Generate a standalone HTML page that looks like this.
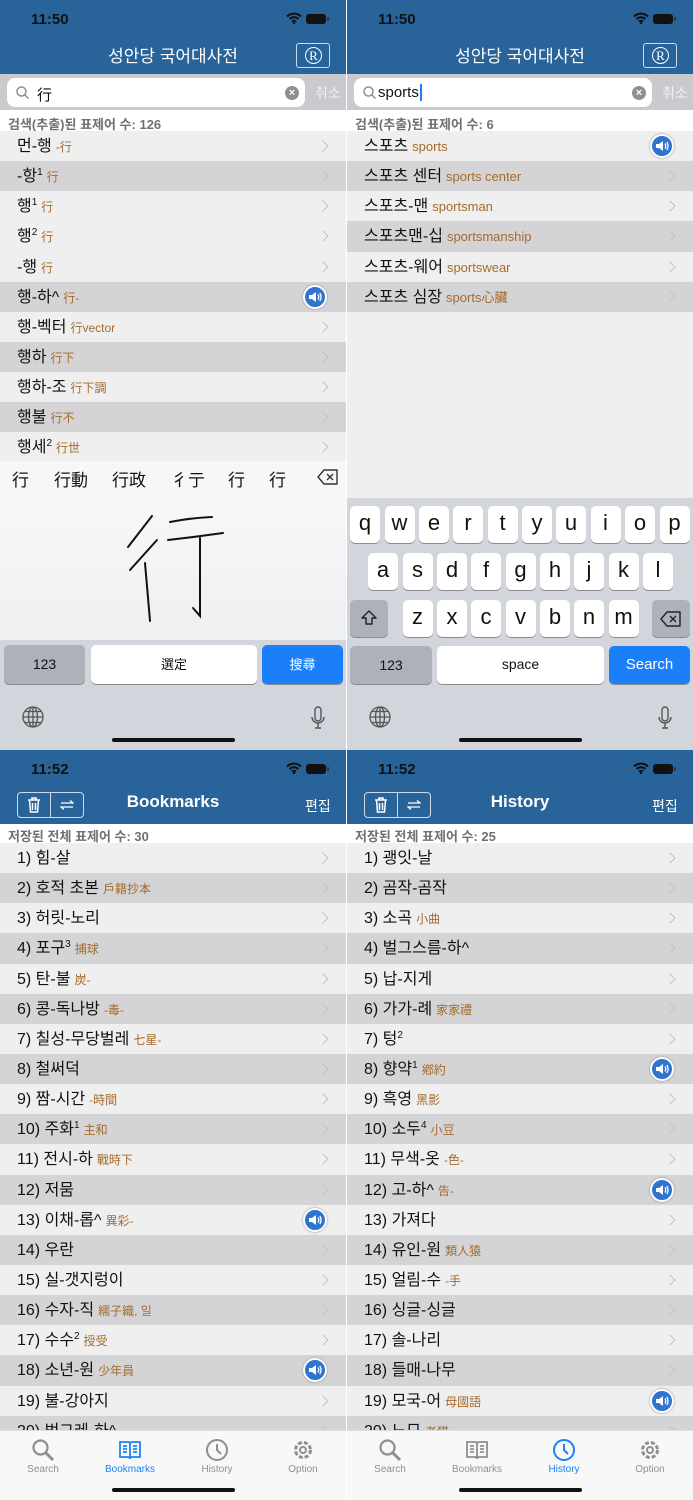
<!DOCTYPE html>
<html><head><meta charset="utf-8">
<style>
*{margin:0;padding:0;box-sizing:border-box}
body{width:693px;height:1500px;background:#fff;position:relative;overflow:hidden;font-family:"Liberation Sans","Noto Sans CJK KR",sans-serif}
.s{position:absolute;width:346px;height:750px;overflow:hidden;background:#efeff0}
.st{position:absolute;left:0;top:0;width:100%;height:38px;background:#28649a}
.tm{position:absolute;left:31px;top:11px;font-size:15px;font-weight:bold;color:#111}
.bat{position:absolute;left:306px;top:14px;width:20px;height:10px;background:#111;border-radius:3px}
.bat:after{content:"";position:absolute;right:-3px;top:3px;width:2px;height:4px;background:#333;border-radius:1px}
.dots{position:absolute;left:268px;top:18px;width:14px;height:2px;background:repeating-linear-gradient(90deg,#3a5f82 0 2px,transparent 2px 4px)}
.wifi{position:absolute;left:286px;top:12px}
.nav{position:absolute;left:0;top:38px;width:100%;height:36px;background:#28649a;color:#fff}
.ttl{position:absolute;left:0;right:0;top:4px;text-align:center;font-size:17px}
.rb{position:absolute;left:296px;top:5px;width:34px;height:25px;border:1px solid #cfdbe8;border-radius:3px}
.rb b{position:absolute;left:8px;top:3px;width:17px;height:17px;border:1.5px solid #fff;border-radius:50%;font:13px "Liberation Serif",serif;text-align:center;line-height:15px}
.sb{position:absolute;left:0;top:74px;width:100%;height:36px;background:#c9c9ce}
.fld{position:absolute;left:7px;top:4px;width:298px;height:29px;background:#fff;border-radius:8px;font-size:15px;color:#111}
.fld .q{position:absolute;left:30px;top:6px}
.x{position:absolute;right:6px;top:8px;width:14px;height:14px;border-radius:50%;background:#8e8e93;color:#fff;font-size:11px;line-height:14px;text-align:center;font-weight:bold}
.cc{position:absolute;left:315px;top:9px;font-size:14px;color:#eef0f4}
.cnt{position:absolute;left:0;width:100%;height:21px;background:#fff;font-size:13px;color:#707070;padding:4px 0 0 8px;font-weight:bold}
.list{position:absolute;left:0;width:100%}
.r{position:relative;height:30.15px;background:#efeff0;padding-left:17px;font-size:16px;color:#111;line-height:31px;white-space:nowrap}
.r.d{background:#d4d4d6}
.r .h{font-size:12px;color:#a56a2b;margin-left:4px}
.r sup{font-size:10px;vertical-align:6px;line-height:0}
.r:after{content:"";position:absolute;right:19px;top:11px;width:7px;height:7px;border-top:1.5px solid #c2c2c4;border-right:1.5px solid #c2c2c4;transform:rotate(45deg)}
.r.sp:after{display:none}
.spk{position:absolute;right:19px;top:3px;width:24px;height:24px;border-radius:50%;background:#2f74cf;border:2px solid #fff;box-shadow:0 0 2px #888}
.spk svg{position:absolute;left:3px;top:3px}
.kb{position:absolute;left:0;width:100%;background:#d2d5db}
.k{position:absolute;background:#fff;border-radius:5px;box-shadow:0 1px 0 #888b90;text-align:center;font-size:22px;color:#111;line-height:34px}
.k.g{background:#acb1ba}
.k.b{background:#1a7ff9;color:#fff;font-size:15px}
.home{position:absolute;left:112px;top:738px;width:123px;height:4px;border-radius:2px;background:#111}
.tab{position:absolute;left:0;top:680px;width:100%;height:70px;background:#f8f8f8;border-top:1px solid #ddd}
.ti{position:absolute;top:0;width:60px;text-align:center;font-size:10px;color:#8e8e93}
.ti svg{display:block;margin:7px auto 2px}
.ti.a{color:#1a82f7}
</style></head><body>

<!-- ============ TOP LEFT ============ -->
<div class="s" style="left:0;top:0">
 <div class="st"><span class="tm">11:50</span><div class="dots"></div>
  <svg class="wifi" width="16" height="12" viewBox="0 0 16 12"><path d="M1 4.5A10 10 0 0 1 15 4.5M3.5 7A6.5 6.5 0 0 1 12.5 7M6 9.5A3 3 0 0 1 10 9.5" stroke="#111" stroke-width="2" fill="none"/><circle cx="8" cy="11" r="1.2" fill="#111"/></svg>
  <div class="bat"></div></div>
 <div class="nav"><div class="ttl">성안당 국어대사전</div><div class="rb"><b>R</b></div></div>
 <div class="sb"><div class="fld"><svg style="position:absolute;left:9px;top:8px" width="13" height="13"><circle cx="5.5" cy="5.5" r="4.5" stroke="#8e8e93" stroke-width="1.5" fill="none"/><path d="M9 9l3.5 3.5" stroke="#8e8e93" stroke-width="1.5"/></svg><span class="q">行</span><div class="x">×</div></div><span class="cc">취소</span></div>
 <div class="cnt" style="top:110px">검색(추출)된 표제어 수: 126</div>
 <div class="list" style="top:131px">
  <div class="r">먼-행<span class="h">-行</span></div>
  <div class="r d">-항<sup>1</sup><span class="h">行</span></div>
  <div class="r">행<sup>1</sup><span class="h">行</span></div>
  <div class="r">행<sup>2</sup><span class="h">行</span></div>
  <div class="r">-행<span class="h">行</span></div>
  <div class="r d sp">행-하^<span class="h">行-</span><div class="spk"><svg width="14" height="14" viewBox="0 0 14 14"><path d="M1 5h3l4-3v10l-4-3H1z" fill="#fff"/><path d="M10 4.5q1.5 2.5 0 5M11.8 3q2.5 4 0 8" stroke="#fff" stroke-width="1.3" fill="none"/></svg></div></div>
  <div class="r">행-벡터<span class="h">行vector</span></div>
  <div class="r d">행하<span class="h">行下</span></div>
  <div class="r">행하-조<span class="h">行下調</span></div>
  <div class="r d">행불<span class="h">行不</span></div>
  <div class="r">행세<sup>2</sup><span class="h">行世</span></div>
 </div>
 <div style="position:absolute;left:0;top:461px;width:346px;height:289px;background:linear-gradient(#f7f7f8,#eeeff1 55%,#d2d5db 56%)">
  <div style="position:absolute;top:0;left:0;width:100%;height:31px;font-size:17px;color:#111;background:#f7f7f8">
   <span style="position:absolute;left:12px;top:5px">行</span><span style="position:absolute;left:54px;top:5px">行動</span><span style="position:absolute;left:112px;top:5px">行政</span><span style="position:absolute;left:171px;top:5px">彳亍</span><span style="position:absolute;left:228px;top:5px">行</span><span style="position:absolute;left:269px;top:5px">行</span>
   <svg style="position:absolute;left:317px;top:8px" width="22" height="16" viewBox="0 0 22 16"><path d="M7 1h13v14H7L1 8z" stroke="#333" stroke-width="1.4" fill="none" stroke-linejoin="round"/><path d="M10 5l6 6M16 5l-6 6" stroke="#333" stroke-width="1.4"/></svg>
  </div>
  <div style="position:absolute;top:31px;left:0;width:100%;height:148px;background:linear-gradient(#f8f8f9,#eeeff1)"></div>
 </div>
 <svg style="position:absolute;left:0;top:0" width="346" height="750"><g stroke="#111" stroke-width="2" fill="none" stroke-linecap="round"><path d="M152 516L128 547"/><path d="M157 540L130 570"/><path d="M145 563L150 621"/><path d="M170 522Q190 518 212 517"/><path d="M168 540Q195 537 223 533"/><path d="M200 538L200 616L193 608"/></g></svg>
 <div class="k g" style="left:4px;top:645px;width:81px;height:39px;font-size:14px;line-height:39px">123</div>
 <div class="k" style="left:91px;top:645px;width:166px;height:39px;font-size:13px;line-height:39px">選定</div>
 <div class="k b" style="left:262px;top:645px;width:81px;height:39px;font-size:13px;line-height:39px">搜尋</div>
 <svg style="position:absolute;left:22px;top:706px" width="22" height="22" viewBox="0 0 22 22"><g stroke="#555" stroke-width="1.3" fill="none"><circle cx="11" cy="11" r="10"/><ellipse cx="11" cy="11" rx="4.5" ry="10"/><path d="M1 11h20M3 5.5h16M3 16.5h16M11 1v20"/></g></svg>
 <svg style="position:absolute;left:311px;top:706px" width="14" height="24" viewBox="0 0 14 24"><g stroke="#555" stroke-width="1.4" fill="none"><rect x="4" y="1" width="6" height="14" rx="3"/><path d="M1 11a6 6 0 0 0 12 0M7 17v5M4 22h6"/></g></svg>
 <div class="home"></div>
</div>

<!-- ============ TOP RIGHT ============ -->
<div class="s" style="left:347px;top:0">
 <div class="st"><span class="tm">11:50</span><div class="dots"></div>
  <svg class="wifi" width="16" height="12" viewBox="0 0 16 12"><path d="M1 4.5A10 10 0 0 1 15 4.5M3.5 7A6.5 6.5 0 0 1 12.5 7M6 9.5A3 3 0 0 1 10 9.5" stroke="#111" stroke-width="2" fill="none"/><circle cx="8" cy="11" r="1.2" fill="#111"/></svg>
  <div class="bat"></div></div>
 <div class="nav"><div class="ttl">성안당 국어대사전</div><div class="rb"><b>R</b></div></div>
 <div class="sb"><div class="fld"><svg style="position:absolute;left:9px;top:8px" width="13" height="13"><circle cx="5.5" cy="5.5" r="4.5" stroke="#8e8e93" stroke-width="1.5" fill="none"/><path d="M9 9l3.5 3.5" stroke="#8e8e93" stroke-width="1.5"/></svg><span class="q" style="left:24px">sports<span style="border-left:2px solid #1a7ff9;margin-left:1px"></span></span><div class="x">×</div></div><span class="cc">취소</span></div>
 <div class="cnt" style="top:110px">검색(추출)된 표제어 수: 6</div>
 <div class="list" style="top:131px">
  <div class="r sp">스포츠<span class="h" style="font-size:13px">sports</span><div class="spk"><svg width="14" height="14" viewBox="0 0 14 14"><path d="M1 5h3l4-3v10l-4-3H1z" fill="#fff"/><path d="M10 4.5q1.5 2.5 0 5M11.8 3q2.5 4 0 8" stroke="#fff" stroke-width="1.3" fill="none"/></svg></div></div>
  <div class="r d">스포츠 센터<span class="h" style="font-size:13px">sports center</span></div>
  <div class="r">스포츠-맨<span class="h" style="font-size:13px">sportsman</span></div>
  <div class="r d">스포츠맨-십<span class="h" style="font-size:13px">sportsmanship</span></div>
  <div class="r">스포츠-웨어<span class="h" style="font-size:13px">sportswear</span></div>
  <div class="r d">스포츠 심장<span class="h" style="font-size:13px">sports心臟</span></div>
 </div>
 <div class="kb" style="top:498px;height:252px"></div>
 <div class="k" style="left:3px;top:506px;width:30px;height:37px">q</div>
 <div class="k" style="left:37.5px;top:506px;width:30px;height:37px">w</div>
 <div class="k" style="left:72px;top:506px;width:30px;height:37px">e</div>
 <div class="k" style="left:106px;top:506px;width:30px;height:37px">r</div>
 <div class="k" style="left:140.5px;top:506px;width:30px;height:37px">t</div>
 <div class="k" style="left:175px;top:506px;width:30px;height:37px">y</div>
 <div class="k" style="left:209px;top:506px;width:30px;height:37px">u</div>
 <div class="k" style="left:243.5px;top:506px;width:30px;height:37px">i</div>
 <div class="k" style="left:278px;top:506px;width:30px;height:37px">o</div>
 <div class="k" style="left:312.5px;top:506px;width:30px;height:37px">p</div>
 <div class="k" style="left:21px;top:553px;width:30px;height:37px">a</div>
 <div class="k" style="left:55.5px;top:553px;width:30px;height:37px">s</div>
 <div class="k" style="left:90px;top:553px;width:30px;height:37px">d</div>
 <div class="k" style="left:124px;top:553px;width:30px;height:37px">f</div>
 <div class="k" style="left:158.5px;top:553px;width:30px;height:37px">g</div>
 <div class="k" style="left:193px;top:553px;width:30px;height:37px">h</div>
 <div class="k" style="left:227px;top:553px;width:30px;height:37px">j</div>
 <div class="k" style="left:261.5px;top:553px;width:30px;height:37px">k</div>
 <div class="k" style="left:296px;top:553px;width:30px;height:37px">l</div>
 <div class="k g" style="left:3px;top:600px;width:38px;height:37px"><svg style="margin-top:9px" width="18" height="18" viewBox="0 0 18 18"><path d="M9 2L2 9h4v6h6V9h4z" stroke="#222" stroke-width="1.4" fill="none" stroke-linejoin="round"/></svg></div>
 <div class="k" style="left:55.5px;top:600px;width:30px;height:37px">z</div>
 <div class="k" style="left:90px;top:600px;width:30px;height:37px">x</div>
 <div class="k" style="left:124px;top:600px;width:30px;height:37px">c</div>
 <div class="k" style="left:158.5px;top:600px;width:30px;height:37px">v</div>
 <div class="k" style="left:193px;top:600px;width:30px;height:37px">b</div>
 <div class="k" style="left:227px;top:600px;width:30px;height:37px">n</div>
 <div class="k" style="left:261.5px;top:600px;width:30px;height:37px">m</div>
 <div class="k g" style="left:305px;top:600px;width:38px;height:37px"><svg style="margin-top:11px" width="22" height="16" viewBox="0 0 22 16"><path d="M7 1h13v14H7L1 8z" stroke="#222" stroke-width="1.4" fill="none" stroke-linejoin="round"/><path d="M10 5l6 6M16 5l-6 6" stroke="#222" stroke-width="1.4"/></svg></div>
 <div class="k g" style="left:3px;top:646px;width:82px;height:38px;font-size:14px;line-height:38px">123</div>
 <div class="k" style="left:90px;top:646px;width:167px;height:38px;font-size:14px;line-height:36px">space</div>
 <div class="k b" style="left:262px;top:646px;width:81px;height:38px;line-height:38px">Search</div>
 <svg style="position:absolute;left:22px;top:706px" width="22" height="22" viewBox="0 0 22 22"><g stroke="#555" stroke-width="1.3" fill="none"><circle cx="11" cy="11" r="10"/><ellipse cx="11" cy="11" rx="4.5" ry="10"/><path d="M1 11h20M3 5.5h16M3 16.5h16M11 1v20"/></g></svg>
 <svg style="position:absolute;left:311px;top:706px" width="14" height="24" viewBox="0 0 14 24"><g stroke="#555" stroke-width="1.4" fill="none"><rect x="4" y="1" width="6" height="14" rx="3"/><path d="M1 11a6 6 0 0 0 12 0M7 17v5M4 22h6"/></g></svg>
 <div class="home"></div>
</div>

<!-- ============ BOTTOM LEFT ============ -->
<div class="s" style="left:0;top:750px">
 <div class="st"><span class="tm">11:52</span><div class="dots"></div>
  <svg class="wifi" width="16" height="12" viewBox="0 0 16 12"><path d="M1 4.5A10 10 0 0 1 15 4.5M3.5 7A6.5 6.5 0 0 1 12.5 7M6 9.5A3 3 0 0 1 10 9.5" stroke="#111" stroke-width="2" fill="none"/><circle cx="8" cy="11" r="1.2" fill="#111"/></svg>
  <div class="bat"></div></div>
 <div class="nav"><div class="ttl" style="font-weight:bold">Bookmarks</div>
  <div style="position:absolute;left:17px;top:4px;width:67px;height:26px;border:1px solid #cfdbe8;border-radius:4px"><div style="position:absolute;left:32px;top:0;width:1px;height:24px;background:#cfdbe8"></div>
   <svg style="position:absolute;left:9px;top:4px" width="14" height="16" viewBox="0 0 14 16"><path d="M1 3h12M5 3V1h4v2M2.5 3l1 12h7l1-12M5.5 6v7M8.5 6v7" stroke="#fff" stroke-width="1.5" fill="none"/></svg>
   <svg style="position:absolute;left:42px;top:7px" width="14" height="10" viewBox="0 0 14 10"><path d="M1 3h12l-3-2.5M13 7H1l3 2.5" stroke="#fff" stroke-width="1.2" fill="none"/></svg></div>
  <span style="position:absolute;left:305px;top:8px;font-size:14px">편집</span></div>
 <div class="cnt" style="top:74px;height:19px;padding-top:2px">저장된 전체 표제어 수: 30</div>
 <div class="list" style="top:93px">
  <div class="r">1) 힘-살</div>
  <div class="r d">2) 호적 초본<span class="h">戶籍抄本</span></div>
  <div class="r">3) 허릿-노리</div>
  <div class="r d">4) 포구<sup>3</sup><span class="h">捕球</span></div>
  <div class="r">5) 탄-불<span class="h">炭-</span></div>
  <div class="r d">6) 콩-독나방<span class="h">-毒-</span></div>
  <div class="r">7) 칠성-무당벌레<span class="h">七星-</span></div>
  <div class="r d">8) 철써덕</div>
  <div class="r">9) 짬-시간<span class="h">-時間</span></div>
  <div class="r d">10) 주화<sup>1</sup><span class="h">主和</span></div>
  <div class="r">11) 전시-하<span class="h">戰時下</span></div>
  <div class="r d">12) 저뭄</div>
  <div class="r sp">13) 이채-롭^<span class="h">異彩-</span><div class="spk"><svg width="14" height="14" viewBox="0 0 14 14"><path d="M1 5h3l4-3v10l-4-3H1z" fill="#fff"/><path d="M10 4.5q1.5 2.5 0 5M11.8 3q2.5 4 0 8" stroke="#fff" stroke-width="1.3" fill="none"/></svg></div></div>
  <div class="r d">14) 우란</div>
  <div class="r">15) 실-갯지렁이</div>
  <div class="r d">16) 수자-직<span class="h">繻子織, 일</span></div>
  <div class="r">17) 수수<sup>2</sup><span class="h">授受</span></div>
  <div class="r d sp">18) 소년-원<span class="h">少年員</span><div class="spk"><svg width="14" height="14" viewBox="0 0 14 14"><path d="M1 5h3l4-3v10l-4-3H1z" fill="#fff"/><path d="M10 4.5q1.5 2.5 0 5M11.8 3q2.5 4 0 8" stroke="#fff" stroke-width="1.3" fill="none"/></svg></div></div>
  <div class="r">19) 불-강아지</div>
  <div class="r d">20) 벙그레-하^</div>
 </div>
 <div class="tab">
  <div class="ti" style="left:13px"><svg width="24" height="24" viewBox="0 0 24 24"><circle cx="9.5" cy="9.5" r="7" stroke="#8e8e93" stroke-width="2.2" fill="none"/><path d="M14.5 14.5L22 22" stroke="#8e8e93" stroke-width="3"/></svg>Search</div>
  <div class="ti a" style="left:100px"><svg width="24" height="24" viewBox="0 0 24 24"><g stroke="#1a82f7" stroke-width="1.8" fill="none"><path d="M2 4h8q2 0 2 2v15q0-2-2-2H2zM22 4h-8q-2 0-2 2v15q0-2 2-2h8z"/><path d="M5 8h4M5 11h4M5 14h4M15 8h4M15 11h4M15 14h4"/></g></svg>Bookmarks</div>
  <div class="ti" style="left:187px"><svg width="24" height="24" viewBox="0 0 24 24"><circle cx="12" cy="12" r="10" stroke="#8e8e93" stroke-width="2" fill="none"/><path d="M12 6v6l4 4" stroke="#8e8e93" stroke-width="2" fill="none"/></svg>History</div>
  <div class="ti" style="left:273px"><svg width="24" height="24" viewBox="0 0 24 24"><circle cx="12" cy="12" r="7.5" stroke="#8e8e93" stroke-width="3" stroke-dasharray="4 2" fill="none"/><circle cx="12" cy="12" r="3" stroke="#8e8e93" stroke-width="2" fill="none"/></svg>Option</div>
 </div>
 <div class="home"></div>
</div>

<!-- ============ BOTTOM RIGHT ============ -->
<div class="s" style="left:347px;top:750px">
 <div class="st"><span class="tm">11:52</span><div class="dots"></div>
  <svg class="wifi" width="16" height="12" viewBox="0 0 16 12"><path d="M1 4.5A10 10 0 0 1 15 4.5M3.5 7A6.5 6.5 0 0 1 12.5 7M6 9.5A3 3 0 0 1 10 9.5" stroke="#111" stroke-width="2" fill="none"/><circle cx="8" cy="11" r="1.2" fill="#111"/></svg>
  <div class="bat"></div></div>
 <div class="nav"><div class="ttl" style="font-weight:bold">History</div>
  <div style="position:absolute;left:17px;top:4px;width:67px;height:26px;border:1px solid #cfdbe8;border-radius:4px"><div style="position:absolute;left:32px;top:0;width:1px;height:24px;background:#cfdbe8"></div>
   <svg style="position:absolute;left:9px;top:4px" width="14" height="16" viewBox="0 0 14 16"><path d="M1 3h12M5 3V1h4v2M2.5 3l1 12h7l1-12M5.5 6v7M8.5 6v7" stroke="#fff" stroke-width="1.5" fill="none"/></svg>
   <svg style="position:absolute;left:42px;top:7px" width="14" height="10" viewBox="0 0 14 10"><path d="M1 3h12l-3-2.5M13 7H1l3 2.5" stroke="#fff" stroke-width="1.2" fill="none"/></svg></div>
  <span style="position:absolute;left:305px;top:8px;font-size:14px">편집</span></div>
 <div class="cnt" style="top:74px;height:19px;padding-top:2px">저장된 전체 표제어 수: 25</div>
 <div class="list" style="top:93px">
  <div class="r">1) 괭잇-날</div>
  <div class="r d">2) 곰작-곰작</div>
  <div class="r">3) 소곡<span class="h">小曲</span></div>
  <div class="r d">4) 벌그스름-하^</div>
  <div class="r">5) 납-지게</div>
  <div class="r d">6) 가가-례<span class="h">家家禮</span></div>
  <div class="r">7) 텅<sup>2</sup></div>
  <div class="r d sp">8) 향약<sup>1</sup><span class="h">鄕約</span><div class="spk"><svg width="14" height="14" viewBox="0 0 14 14"><path d="M1 5h3l4-3v10l-4-3H1z" fill="#fff"/><path d="M10 4.5q1.5 2.5 0 5M11.8 3q2.5 4 0 8" stroke="#fff" stroke-width="1.3" fill="none"/></svg></div></div>
  <div class="r">9) 흑영<span class="h">黑影</span></div>
  <div class="r d">10) 소두<sup>4</sup><span class="h">小豆</span></div>
  <div class="r">11) 무색-옷<span class="h">-色-</span></div>
  <div class="r d sp">12) 고-하^<span class="h">告-</span><div class="spk"><svg width="14" height="14" viewBox="0 0 14 14"><path d="M1 5h3l4-3v10l-4-3H1z" fill="#fff"/><path d="M10 4.5q1.5 2.5 0 5M11.8 3q2.5 4 0 8" stroke="#fff" stroke-width="1.3" fill="none"/></svg></div></div>
  <div class="r">13) 가져다</div>
  <div class="r d">14) 유인-원<span class="h">類人猿</span></div>
  <div class="r">15) 얼림-수<span class="h">-手</span></div>
  <div class="r d">16) 싱글-싱글</div>
  <div class="r">17) 솔-나리</div>
  <div class="r d">18) 들매-나무</div>
  <div class="r sp">19) 모국-어<span class="h">母國語</span><div class="spk"><svg width="14" height="14" viewBox="0 0 14 14"><path d="M1 5h3l4-3v10l-4-3H1z" fill="#fff"/><path d="M10 4.5q1.5 2.5 0 5M11.8 3q2.5 4 0 8" stroke="#fff" stroke-width="1.3" fill="none"/></svg></div></div>
  <div class="r d">20) 노묘<span class="h">老猫</span></div>
 </div>
 <div class="tab">
  <div class="ti" style="left:13px"><svg width="24" height="24" viewBox="0 0 24 24"><circle cx="9.5" cy="9.5" r="7" stroke="#8e8e93" stroke-width="2.2" fill="none"/><path d="M14.5 14.5L22 22" stroke="#8e8e93" stroke-width="3"/></svg>Search</div>
  <div class="ti" style="left:100px"><svg width="24" height="24" viewBox="0 0 24 24"><g stroke="#8e8e93" stroke-width="1.8" fill="none"><path d="M2 4h8q2 0 2 2v15q0-2-2-2H2zM22 4h-8q-2 0-2 2v15q0-2 2-2h8z"/><path d="M5 8h4M5 11h4M5 14h4M15 8h4M15 11h4M15 14h4"/></g></svg>Bookmarks</div>
  <div class="ti a" style="left:187px"><svg width="24" height="24" viewBox="0 0 24 24"><circle cx="12" cy="12" r="10" stroke="#1a82f7" stroke-width="2" fill="none"/><path d="M12 6v6l4 4" stroke="#1a82f7" stroke-width="2" fill="none"/></svg>History</div>
  <div class="ti" style="left:273px"><svg width="24" height="24" viewBox="0 0 24 24"><circle cx="12" cy="12" r="7.5" stroke="#8e8e93" stroke-width="3" stroke-dasharray="4 2" fill="none"/><circle cx="12" cy="12" r="3" stroke="#8e8e93" stroke-width="2" fill="none"/></svg>Option</div>
 </div>
 <div class="home"></div>
</div>
</body></html>
